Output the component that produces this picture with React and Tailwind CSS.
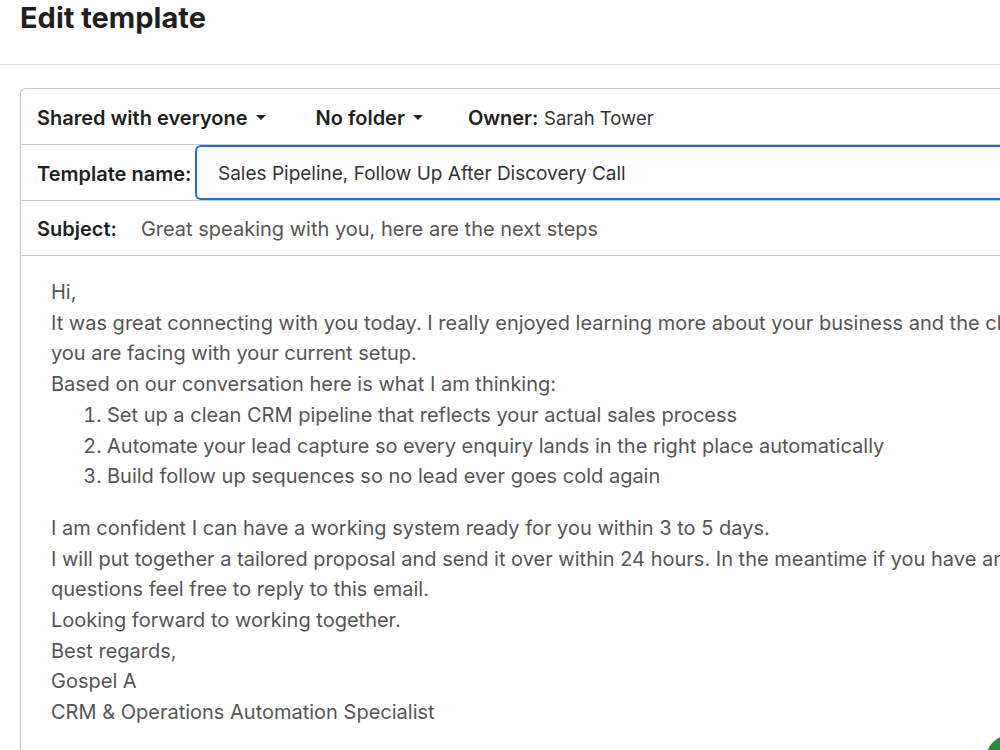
import { useState } from 'react';

const font = { fontFamily: 'Inter, "Noto Sans", sans-serif' };

const Caret = () => (
    <svg width="10" height="6" viewBox="0 0 10 6" className="ml-2 inline-block">
        <path d="M0 0 L10 0 L5 5 Z" fill="#222" />
    </svg>
);

export default function App() {
    const [name, setName] = useState('Sales Pipeline, Follow Up After Discovery Call');

    return (
        <div className="w-[1000px] h-[750px] overflow-hidden bg-white relative" style={font}>
            {/* Header */}
            <div className="h-[65px] border-b border-[#dcdcdc] px-5">
                <h1 className="text-[29px] font-bold text-[#1f1f1f] leading-9">Edit template</h1>
            </div>

            {/* Card */}
            <div className="ml-5 mt-[23px] w-[980px] border border-r-0 border-[#c8c8c8] rounded-tl-md">
                {/* Row: sharing */}
                <div className="h-[56px] flex items-center px-4 border-b border-[#c8c8c8] text-[20px] text-[#1f1f1f] pt-[2px]">
                    <button className="flex items-center font-semibold">
                        Shared with everyone <Caret />
                    </button>
                    <button className="flex items-center font-semibold ml-[50px]">
                        No folder <Caret />
                    </button>
                    <div className="ml-[45px]">
                        <span className="font-semibold">Owner:</span>{' '}
                        <span className="text-[#333] text-[18.5px]">Sarah Tower</span>
                    </div>
                </div>

                {/* Row: template name */}
                <div className="h-[56px] flex items-center pl-4 border-b border-[#c8c8c8] text-[20px]">
                    <label className="font-semibold text-[#1f1f1f] w-[158px] shrink-0 pt-[2px]">Template name:</label>
                    <input
                        autoFocus
                        value={name}
                        onChange={(e) => setName(e.target.value)}
                        className="flex-1 min-w-0 h-[55px] -my-px border-2 border-r-0 border-[#1a6fdd] rounded-l-md pl-[21px] pt-[2px] text-[19px] text-[#333] outline-none caret-black"
                    />
                </div>

                {/* Row: subject */}
                <div className="h-[55px] flex items-center px-4 border-b border-[#c8c8c8] text-[20px] pt-[1px]">
                    <span className="font-semibold text-[#1f1f1f]">Subject:</span>
                    <span className="ml-[24px] text-[#555]">Great speaking with you, here are the next steps</span>
                </div>

                {/* Body */}
                <div className="pl-[30px] pt-[21px] pb-10 text-[20px] leading-[30.7px] text-[#555] whitespace-nowrap overflow-hidden">
                    <p>Hi,</p>
                    <p>It was great connecting with you today. I really enjoyed learning more about your business and the challenges</p>
                    <p>you are facing with your current setup.</p>
                    <p>Based on our conversation here is what I am thinking:</p>
                    <ol className="list-decimal pl-[56px] mb-[21px]">
                        <li>Set up a clean CRM pipeline that reflects your actual sales process</li>
                        <li>Automate your lead capture so every enquiry lands in the right place automatically</li>
                        <li>Build follow up sequences so no lead ever goes cold again</li>
                    </ol>
                    <p>I am confident I can have a working system ready for you within 3 to 5 days.</p>
                    <p>I will put together a tailored proposal and send it over within 24 hours. In the meantime if you have any</p>
                    <p>questions feel free to reply to this email.</p>
                    <p>Looking forward to working together.</p>
                    <p>Best regards,</p>
                    <p>Gospel A</p>
                    <p>CRM &amp; Operations Automation Specialist</p>
                </div>
            </div>

            {/* Floating action button peeking in */}
            <div className="absolute left-[986px] top-[735px] w-12 h-12 rounded-full bg-[#1e8e3e]" />
        </div>
    );
}
